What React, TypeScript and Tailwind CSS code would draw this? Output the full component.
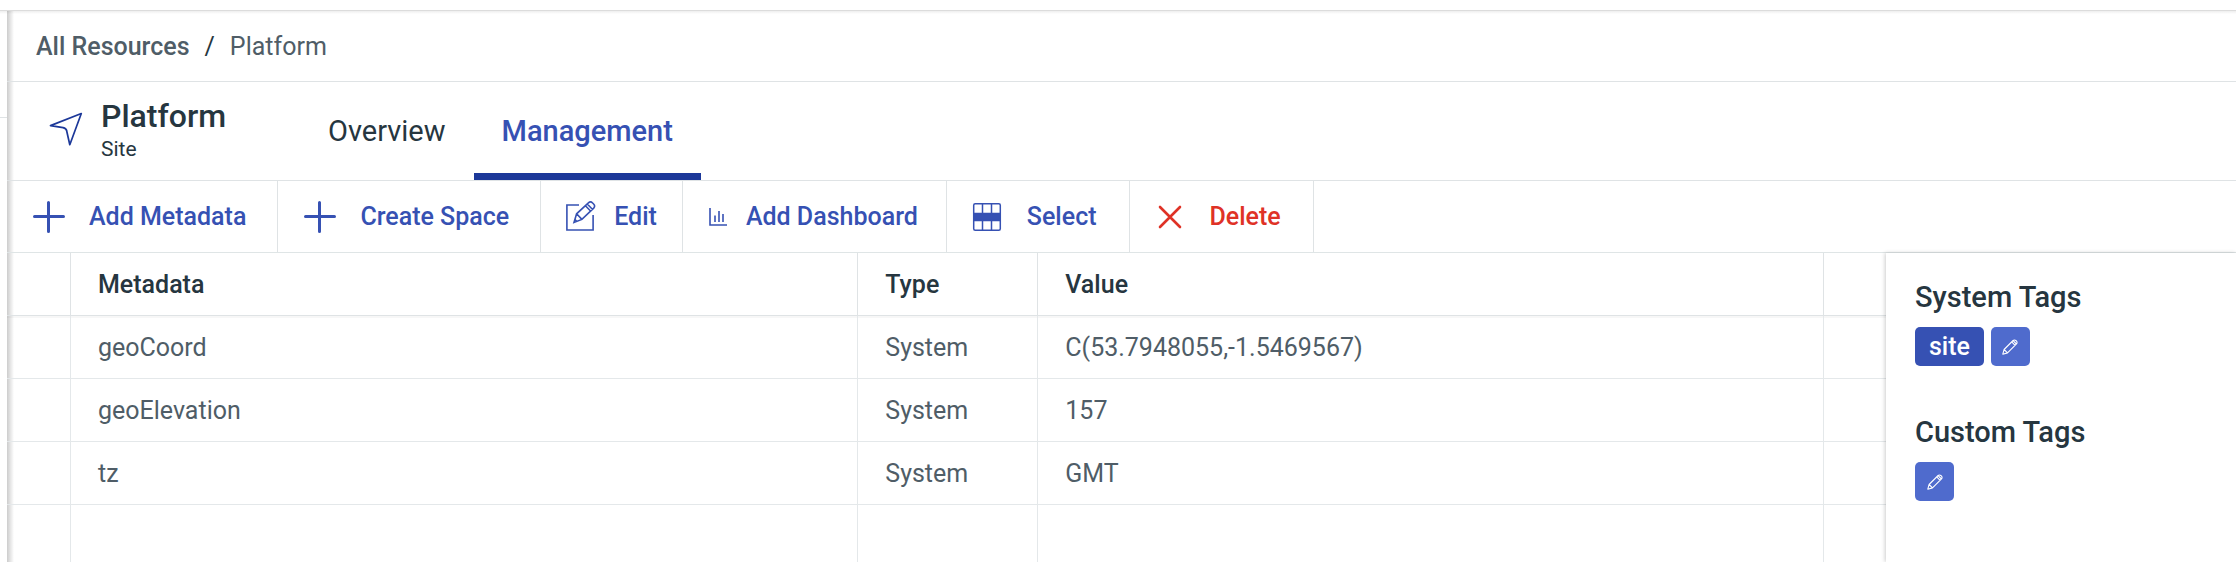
import type { ReactNode } from "react";

function PlusIcon() {
  return (
    <svg viewBox="0 0 32 32" className="h-8 w-8" fill="none" stroke="currentColor" strokeWidth="3" strokeLinecap="round" aria-hidden="true">
      <path d="M15.500 1.500v29M1.500 15.500h29" />
    </svg>
  );
}

function EditIcon() {
  return (
    <svg viewBox="0 0 32 32" className="h-8 w-8" fill="none" stroke="currentColor" strokeWidth="1.6" aria-hidden="true">
      <path d="M13 4H.9v25h26.2V14" />
      <path d="M8 21.500l2.600-8.700L22.400 1.900a3 3 0 0 1 4.200.1l1 1a3 3 0 0 1 .1 4.100L15.900 18.400zM10.600 12.800l5.300 5.600M19.400 4.700l5.400 5.500M21.300 3l5.300 5.500M9 18.500l2 2" />
    </svg>
  );
}

function ChartIcon() {
  return (
    <svg viewBox="0 0 20 20" className="h-5 w-5" fill="none" stroke="currentColor" strokeWidth="1.6" aria-hidden="true">
      <path d="M1 1v17h17M6 15V8.500M10 15V4M14 15V7" />
    </svg>
  );
}

function SelectIcon() {
  return (
    <svg viewBox="0 0 32 32" className="h-8 w-8" fill="none" stroke="currentColor" strokeWidth="1.5" aria-hidden="true">
      <rect x="2.7" y="2.7" width="26.6" height="26.6" rx="1.5" />
      <path d="M11.5 3v26M20.5 3v26" />
      <path d="M3 12.500h26v7H3z" fill="currentColor" />
    </svg>
  );
}

function DeleteIcon() {
  return (
    <svg viewBox="0 0 32 32" className="h-8 w-8" fill="none" stroke="currentColor" strokeWidth="2.6" strokeLinecap="round" aria-hidden="true">
      <path d="M6 6l20 20M26 6L6 26" />
    </svg>
  );
}

function PencilIcon() {
  return (
    <svg viewBox="0 0 16 16" className="h-4 w-4" fill="none" stroke="currentColor" strokeWidth="1.1" strokeLinejoin="round" aria-hidden="true">
      <path d="M.8 15.200l1.300-4.700 9-9a1.900 1.900 0 0 1 2.700 0l.7.7a1.900 1.900 0 0 1 0 2.700l-9 9zM2.100 10.500l3.400 3.400M9.700 2.900l3.400 3.400M11.100 1.700l3.300 3.300" />
    </svg>
  );
}

const actions: { label: string; icon: ReactNode; style: string }[] = [
  { label: "Add Metadata", icon: <PlusIcon />, style: "gap-6 pl-[26px] pr-[31px] text-[#3651b3]" },
  { label: "Create Space", icon: <PlusIcon />, style: "gap-6 pl-[26px] pr-[31px] text-[#3651b3]" },
  { label: "Edit", icon: <EditIcon />, style: "gap-4 px-[25px] text-[#3651b3]" },
  { label: "Add Dashboard", icon: <ChartIcon />, style: "gap-[17px] pl-[26px] pr-7 text-[#3651b3]" },
  { label: "Select", icon: <SelectIcon />, style: "gap-6 pl-6 pr-8 text-[#3651b3]" },
  { label: "Delete", icon: <DeleteIcon />, style: "gap-6 pl-6 pr-8 text-[#df3226]" },
];

const rows = [
  { name: "geoCoord", type: "System", value: "C(53.7948055,-1.5469567)" },
  { name: "geoElevation", type: "System", value: "157" },
  { name: "tz", type: "System", value: "GMT" },
];

const head = "border-r border-b border-[#dfe3e5] pt-[2px] pl-[27px] text-left font-medium text-[#263640]";
const cell = "border-r border-b border-[#e4e8ea] pt-[2px] pl-[27px]";
const rest = "border-r border-[#e4e8ea]";

function EditTags({ label }: { label: string }) {
  return (
    <button type="button" aria-label={label} className="flex h-[39px] w-[39px] items-center justify-center rounded-[5px] bg-[#4f6bcd] text-white">
      <PencilIcon />
    </button>
  );
}

export default function App() {
  return (
    <div className="flex min-h-screen flex-col bg-white font-['Roboto',sans-serif] text-[25px] text-[#4f5d67]">
      <div className="h-[10px] shrink-0" />
      <div className="flex grow border-t border-[#dcdcdc] bg-linear-to-b from-[#eeeeee] to-white to-[3px]">
        <div className="w-[7px] shrink-0">
          <div className="h-[107px] border-b border-[#dfe3e5]" />
        </div>
        <div className="flex min-w-0 grow flex-col bg-linear-to-r from-black/20 to-transparent to-[7px]">
          <nav aria-label="Breadcrumb" className="flex h-[71px] items-center gap-[15px] border-b border-[#dfe3e5] pt-[2px] pl-[29px]">
            <a href="#resources" className="font-medium">All Resources</a>
            <span className="text-[#263640]">/</span>
            <span>Platform</span>
          </nav>

          <header className="flex h-[99px] border-b border-[#dfe3e5] pl-[42px] text-[#263640]">
            <div className="flex w-[251px] items-center gap-[18px]">
              <svg viewBox="0 0 34 34" className="mb-1 h-[34px] w-[34px]" fill="none" stroke="#1c3899" strokeWidth="1.7" strokeLinejoin="round" aria-hidden="true">
                <path d="M32.300 1.500L1.500 13.600l12.600 2c2 .4 3.300 1.200 3.600 3.400L20.800 32.700z" />
              </svg>
              <div>
                <h1 className="text-[32px] leading-9 font-medium">Platform</h1>
                <p className="text-[21px] leading-[30px]">Site</p>
              </div>
            </div>
            <div role="tablist" className="flex text-[29px]">
              <button type="button" role="tab" aria-selected="false" className="border-y-[7px] border-transparent px-7 pt-[2px]">Overview</button>
              <button type="button" role="tab" aria-selected="true" className="border-y-[7px] border-t-transparent border-b-[#1c3899] px-7 pt-[2px] font-medium text-[#3651b3]">Management</button>
            </div>
          </header>

          <div className="flex h-[72px] border-b border-[#dfe5e6]">
            {actions.map((a) => (
              <button key={a.label} type="button" className={`flex items-center border-r border-[#dfe3e5] font-medium whitespace-nowrap ${a.style}`}>
                {a.icon}
                {a.label}
              </button>
            ))}
          </div>

          <div className="flex grow">
            <div className="min-w-0 grow">
              <table className="h-full w-full table-fixed border-separate border-spacing-0">
                <colgroup>
                  <col className="w-16" />
                  <col className="w-[41.9%]" />
                  <col className="w-[180px]" />
                  <col />
                  <col className="w-[62px]" />
                </colgroup>
                <thead className="shadow-[0_2px_0_rgba(0,0,0,0.03)]">
                  <tr className="h-[63px]">
                    <td className="border-r border-b border-[#dfe3e5]" />
                    <th className={head}>Metadata</th>
                    <th className={head}>Type</th>
                    <th className={head}>Value</th>
                    <td className="border-b border-[#dfe3e5]" />
                  </tr>
                </thead>
                <tbody>
                  {rows.map((r) => (
                    <tr key={r.name} className="h-[63px]">
                      <td className="border-r border-b border-[#e4e8ea]" />
                      <td className={cell}>{r.name}</td>
                      <td className={cell}>{r.type}</td>
                      <td className={cell}>{r.value}</td>
                      <td className="border-b border-[#e4e8ea]" />
                    </tr>
                  ))}
                  <tr>
                    <td className={rest} />
                    <td className={rest} />
                    <td className={rest} />
                    <td className={rest} />
                    <td />
                  </tr>
                </tbody>
              </table>
            </div>

            <aside className="flex w-[350px] shrink-0 flex-col gap-12 bg-white px-[29px] pt-[26px] shadow-[-1px_0_4px_rgba(0,0,0,0.2)]">
              <section>
                <h2 className="text-[29px] leading-9 font-medium text-[#263640]">System Tags</h2>
                <div className="mt-3 flex gap-[7px]">
                  <span className="flex h-[39px] items-center rounded-[5px] bg-[#3651b3] px-[14px] font-medium text-white">site</span>
                  <EditTags label="Edit system tags" />
                </div>
              </section>
              <section>
                <h2 className="text-[29px] leading-9 font-medium text-[#263640]">Custom Tags</h2>
                <div className="mt-3 flex">
                  <EditTags label="Edit custom tags" />
                </div>
              </section>
            </aside>
          </div>
        </div>
      </div>
    </div>
  );
}
